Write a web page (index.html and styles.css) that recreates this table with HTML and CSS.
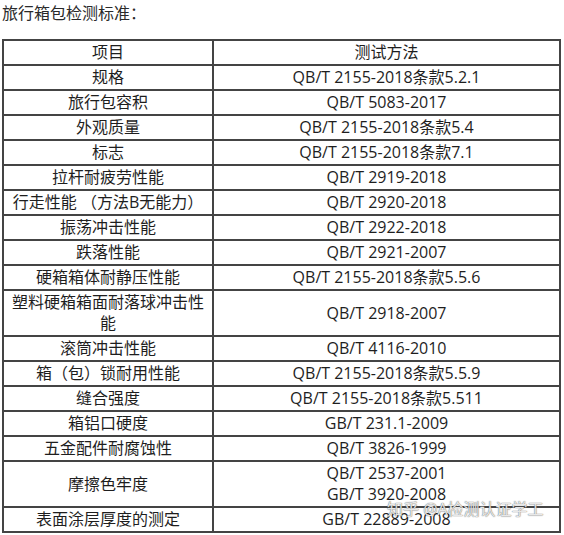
FILE: index.html
```html
<!DOCTYPE html>
<html lang="zh-CN">
<head>
<meta charset="utf-8">
<title>旅行箱包检测标准</title>
<link rel="stylesheet" href="styles.css">
</head>
<body>
<div class="page">
  <p class="title">旅行箱包检测标准：</p>
  <table class="std">
    <tr><td class="item">项目</td><td class="method">测试方法</td></tr>
    <tr><td class="item">规格</td><td class="method">QB/T 2155-2018条款5.2.1</td></tr>
    <tr><td class="item">旅行包容积</td><td class="method">QB/T 5083-2017</td></tr>
    <tr><td class="item">外观质量</td><td class="method">QB/T 2155-2018条款5.4</td></tr>
    <tr><td class="item">标志</td><td class="method">QB/T 2155-2018条款7.1</td></tr>
    <tr><td class="item">拉杆耐疲劳性能</td><td class="method">QB/T 2919-2018</td></tr>
    <tr><td class="item">行走性能 （方法B无能力）</td><td class="method">QB/T 2920-2018</td></tr>
    <tr><td class="item">振荡冲击性能</td><td class="method">QB/T 2922-2018</td></tr>
    <tr><td class="item">跌落性能</td><td class="method">QB/T 2921-2007</td></tr>
    <tr><td class="item">硬箱箱体耐静压性能</td><td class="method">QB/T 2155-2018条款5.5.6</td></tr>
    <tr><td class="item">塑料硬箱箱面耐落球冲击性能</td><td class="method">QB/T 2918-2007</td></tr>
    <tr><td class="item">滚筒冲击性能</td><td class="method">QB/T 4116-2010</td></tr>
    <tr><td class="item">箱（包）锁耐用性能</td><td class="method">QB/T 2155-2018条款5.5.9</td></tr>
    <tr><td class="item">缝合强度</td><td class="method">QB/T 2155-2018条款5.511</td></tr>
    <tr><td class="item">箱铝口硬度</td><td class="method">GB/T 231.1-2009</td></tr>
    <tr><td class="item">五金配件耐腐蚀性</td><td class="method">QB/T 3826-1999</td></tr>
    <tr><td class="item">摩擦色牢度</td><td class="method">QB/T 2537-2001<br>GB/T 3920-2008</td></tr>
    <tr><td class="item">表面涂层厚度的测定</td><td class="method">GB/T 22889-2008</td></tr>
  </table>
  <div class="watermark">知乎 @A检测认证学工</div>
</div>
</body>
</html>
```

FILE: styles.css
```css
html, body {
  margin: 0;
  padding: 0;
  background: #ffffff;
}

.page {
  position: relative;
  padding: 1px 2px 0 2px;
  font-family: "Open Sans", "Noto Sans CJK SC", sans-serif;
  color: #1e1e1e;
  font-size: 16px;
}

.title {
  margin: 0 0 14px 0;
  line-height: 24px;
  color: #2a2a2a;
}

.std {
  width: 559px;
  border-collapse: separate;
  border-spacing: 0;
  border: 1px solid #444444;
}

.std td {
  border: 1px solid #444444;
  padding: 1px 3px;
  line-height: 21px;
  text-align: center;
  vertical-align: middle;
}

.std .item {
  width: 202px;
}

.watermark {
  position: absolute;
  left: 387px;
  top: 499px;
  font-size: 16px;
  line-height: 20px;
  color: rgba(255, 255, 255, 0.85);
  text-shadow: 0 0 1px rgba(90, 90, 90, 0.9), 0 0 1px rgba(90, 90, 90, 0.6);
  white-space: nowrap;
}
```
